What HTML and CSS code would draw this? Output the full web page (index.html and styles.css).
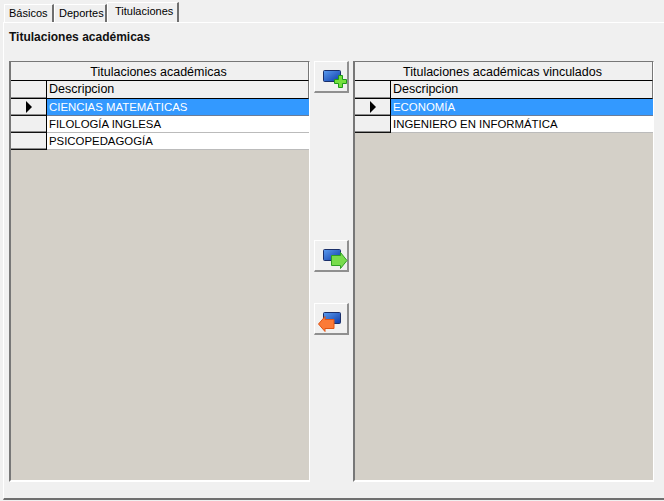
FILE: index.html
```html
<!DOCTYPE html>
<html lang="es">
<head>
<meta charset="utf-8">
<title>Titulaciones</title>
<link rel="stylesheet" href="styles.css">
</head>
<body>
<div class="window">
  <div class="tabs">
    <div class="tab tab-basic">Básicos</div>
    <div class="tab tab-sports">Deportes</div>
    <div class="tab active">Titulaciones</div>
  </div>
  <div class="panel">
    <div class="title">Titulaciones académicas</div>
    <div class="content">
      <div class="grid">
        <div class="caption">Titulaciones académicas</div>
        <div class="row head"><div class="ind"></div><div class="cell">Descripcion</div></div>
        <div class="row sel"><div class="ind"><span class="arrow"></span></div><div class="cell">CIENCIAS MATEMÁTICAS</div></div>
        <div class="row"><div class="ind"></div><div class="cell">FILOLOGÍA INGLESA</div></div>
        <div class="row"><div class="ind"></div><div class="cell">PSICOPEDAGOGÍA</div></div>
      </div>
      <div class="buttons">
        <button class="btn btn-add" type="button" aria-label="Añadir">
          <svg class="ico" width="32" height="29" viewBox="0 0 32 29">
            <defs><linearGradient id="b1" x1="0" y1="0" x2="1" y2="1"><stop offset="0" stop-color="#5a9cf0"/><stop offset="1" stop-color="#0d3aa8"/></linearGradient></defs>
            <rect x="8.5" y="8.5" width="17" height="11" rx="1" fill="url(#b1)" stroke="#1a2f6a"/>
            <path d="M23.5 13.5h4v4h4v4h-4v4h-4v-4h-4v-4h4z" fill="#74e03c" stroke="#1f9a18"/>
          </svg>
        </button>
        <button class="btn btn-right" type="button" aria-label="Vincular">
          <svg class="ico" width="32" height="29" viewBox="0 0 32 29">
            <rect x="8.5" y="8.5" width="17" height="11" rx="1" fill="url(#b1)" stroke="#1a2f6a"/>
            <path d="M16.5 14.5h9v-3l6.5 8-6.5 8v-3h-9z" fill="#78dc4c" stroke="#2fa024"/>
          </svg>
        </button>
        <button class="btn btn-left" type="button" aria-label="Desvincular">
          <svg class="ico" width="32" height="29" viewBox="0 0 32 29">
            <rect x="8.5" y="8.5" width="17" height="11" rx="1" fill="url(#b1)" stroke="#1a2f6a"/>
            <path d="M19 15.5h-9v-3l-6.5 7.5 6.5 7.5v-3h9z" fill="#fb7a38" stroke="#e05414"/>
          </svg>
        </button>
      </div>
      <div class="grid">
        <div class="caption">Titulaciones académicas vinculados</div>
        <div class="row head"><div class="ind"></div><div class="cell">Descripcion</div></div>
        <div class="row sel"><div class="ind"><span class="arrow"></span></div><div class="cell">ECONOMÍA</div></div>
        <div class="row"><div class="ind"></div><div class="cell">INGENIERO EN INFORMÁTICA</div></div>
      </div>
    </div>
  </div>
</div>
</body>
</html>
```

FILE: styles.css
```css
* { box-sizing: border-box; }
html, body { margin: 0; padding: 0; }
body {
  width: 664px;
  height: 501px;
  overflow: hidden;
  background: #f0f0f0;
  font-family: "Liberation Sans", Arial, sans-serif;
  font-size: 11px;
  color: #000;
}
.window { display: flex; flex-direction: column; height: 501px; }
.tabs {
  display: flex;
  align-items: flex-end;
  height: 22px;
  padding-left: 4px;
  flex: none;
}
.tab {
  height: 18px;
  line-height: 17px;
  padding-left: 4px;
  background: #f0f0f0;
  border-top: 1px solid #fff;
  border-left: 1px solid #fff;
  border-right: 2px solid #6f6f6f;
  white-space: nowrap;
}
.tab-basic { width: 50px; }
.tab-sports { width: 53px; }
.tab.active {
  width: 72px;
  height: 20px;
  line-height: 16px;
  padding-left: 7px;
}
.panel {
  flex: none;
  height: 478px;
  margin-left: 3px;
  border-top: 1px solid #fff;
  border-left: 1px solid #fff;
  border-bottom: 2px solid #6f6f6f;
  padding: 7px 0 0 5px;
  display: flex;
  flex-direction: column;
}
.title {
  font-weight: bold;
  font-size: 12px;
  line-height: 14px;
  height: 31px;
  flex: none;
  color: #111;
}
.content {
  display: grid;
  grid-template-columns: 301px 43px 301px;
  height: 421px;
}
.grid {
  background: #d4d0c8;
  border-top: 1px solid #777;
  border-left: 2px solid #777;
  border-right: 1px solid #fff;
  border-bottom: 2px solid #fff;
  display: flex;
  flex-direction: column;
}
.caption {
  height: 19px;
  line-height: 20px;
  padding-right: 2px;
  background: #f0f0f0;
  text-align: center;
  font-size: 12.5px;
  border-bottom: 1px solid #000;
  border-right: 1px solid #777;
  white-space: nowrap;
}
.row {
  display: flex;
  height: 17px;
  background: #fff;
  line-height: 16px;
  font-size: 11.4px;
}
.ind {
  width: 36px;
  flex: none;
  background: #f0f0f0;
  border-right: 1px solid #000;
  border-bottom: 1px solid #111;
  box-shadow: inset 0 -1px 0 #8c8c8c;
  display: flex;
  align-items: center;
  justify-content: center;
  padding-left: 1px;
}
.cell {
  flex: 1;
  padding-left: 2px;
  border-bottom: 1px solid #bbb;
  white-space: nowrap;
}
.head { height: 18px; background: #f0f0f0; font-size: 12.5px; line-height: 17px; }
.head .cell { border-bottom: 1px solid #000; border-right: 1px solid #777; }
.head .ind { border-bottom: 1px solid #000; }
.sel { background: #3399ff; color: #fff; }
.sel .cell { border-bottom: 1px solid #6a7d9a; }
.arrow {
  display: block;
  width: 0;
  height: 0;
  border-top: 6px solid transparent;
  border-bottom: 6px solid transparent;
  border-left: 6px solid #000;
}
.buttons { display: block; }
.btn {
  display: block;
  width: 35px;
  height: 32px;
  padding: 0;
  margin: 0 0 0 4px;
  background: #f0f0f0;
  border-top: 1px solid #fff;
  border-left: 1px solid #fff;
  border-right: 2px solid #8f8f8f;
  border-bottom: 2px solid #8f8f8f;
}
.ico { display: block; overflow: visible; }
.btn-right { margin-top: 147px; }
.btn-left { margin-top: 31px; }
```
